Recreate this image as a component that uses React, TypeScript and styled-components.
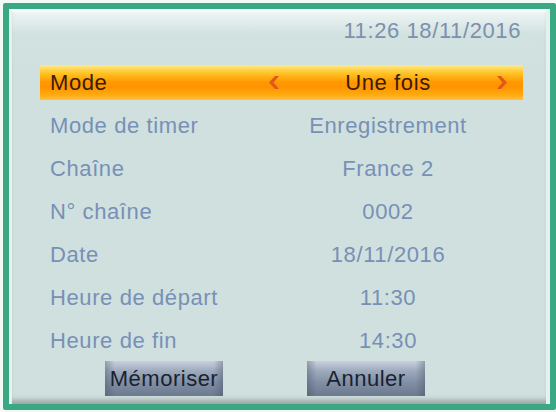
import styled, { createGlobalStyle } from "styled-components";

const GlobalStyle = createGlobalStyle`
  html, body {
    margin: 0;
    padding: 0;
    background-color: #f2faf6;
  }
  body {
    font-family: "Liberation Sans", Arial, sans-serif;
  }
`;

const Frame = styled.div`
  box-sizing: border-box;
  margin: 3px 0 0 3px;
  width: 553px;
  height: 407px;
  border: 6px solid #3aa983;
  border-radius: 2px;
`;

const Panel = styled.div`
  box-sizing: border-box;
  height: 100%;
  border-top: 3px solid #f4fbf9;
  border-left: 3px solid #e6f2ef;
  border-right: 4px solid #e4f1ee;
  background: linear-gradient(to bottom, #eef5f4 0px, #d2e2e1 22px, #cfe0df 60px);
  box-shadow: inset 0 -7px 5px -3px rgba(110, 110, 110, 0.5);
  display: flex;
  flex-direction: column;
`;

const Header = styled.div`
  height: 53px;
  box-sizing: border-box;
  padding: 6px 25px 0 0;
  text-align: right;
  font-size: 22px;
  line-height: 26px;
  letter-spacing: 0.6px;
  color: #7d90ad;
`;

const List = styled.div`
  display: flex;
  flex-direction: column;
  gap: 8px;
  margin-left: 28px;
  width: 483px;
`;

const Row = styled.div<{ $active?: boolean }>`
  display: grid;
  grid-template-columns: 222px 24px 204px 24px 1fr;
  align-items: center;
  height: 35px;
  font-size: 22px;
  letter-spacing: 0.6px;
  color: ${(p) => (p.$active ? "#3a1d00" : "#7890b6")};
  background: ${(p) =>
    p.$active
      ? "linear-gradient(to bottom, #ffe98a 0%, #ffc629 22%, #ff9a00 48%, #ff9200 62%, #ffaa10 85%, #ffc040 100%)"
      : "transparent"};
`;

const Label = styled.span`
  padding-left: 10px;
  white-space: nowrap;
`;

const Value = styled.span`
  text-align: center;
  white-space: nowrap;
`;

const Arrow = styled.svg`
  justify-self: center;
  width: 12px;
  height: 15px;
`;

const Buttons = styled.div`
  display: flex;
  gap: 84px;
  margin: 3px 0 0 93px;
`;

const Button = styled.button`
  box-sizing: border-box;
  width: 118px;
  height: 35px;
  border: none;
  padding: 0;
  font-family: "Liberation Sans", Arial, sans-serif;
  font-size: 22px;
  letter-spacing: 0.5px;
  color: #1a2230;
  background:
    linear-gradient(to right, rgba(60, 70, 90, 0.35), rgba(0, 0, 0, 0) 8%, rgba(0, 0, 0, 0) 92%, rgba(60, 70, 90, 0.35)),
    linear-gradient(to bottom, #c8d0db 0%, #9eabbd 28%, #8290a6 60%, #6c798f 100%);
`;

const rows = [
  { label: "Mode", value: "Une fois", active: true },
  { label: "Mode de timer", value: "Enregistrement" },
  { label: "Chaîne", value: "France 2" },
  { label: "N° chaîne", value: "0002" },
  { label: "Date", value: "18/11/2016" },
  { label: "Heure de départ", value: "11:30" },
  { label: "Heure de fin", value: "14:30" },
];

function LeftArrow() {
  return (
    <Arrow viewBox="0 0 12 15">
      <path d="M11 1 L5.5 7.5 L11 14 L7 14 L1 7.5 L7 1 Z" fill="#e4561c" />
    </Arrow>
  );
}

function RightArrow() {
  return (
    <Arrow viewBox="0 0 12 15">
      <path d="M1 1 L6.5 7.5 L1 14 L5 14 L11 7.5 L5 1 Z" fill="#e4561c" />
    </Arrow>
  );
}

function App() {
  return (
    <>
      <GlobalStyle />
      <Frame>
        <Panel>
          <Header>11:26 18/11/2016</Header>
          <List>
            {rows.map((r) => (
              <Row key={r.label} $active={r.active}>
                <Label>{r.label}</Label>
                {r.active ? <LeftArrow /> : <span />}
                <Value>{r.value}</Value>
                {r.active ? <RightArrow /> : <span />}
                <span />
              </Row>
            ))}
          </List>
          <Buttons>
            <Button>Mémoriser</Button>
            <Button>Annuler</Button>
          </Buttons>
        </Panel>
      </Frame>
    </>
  );
}

export default App;
